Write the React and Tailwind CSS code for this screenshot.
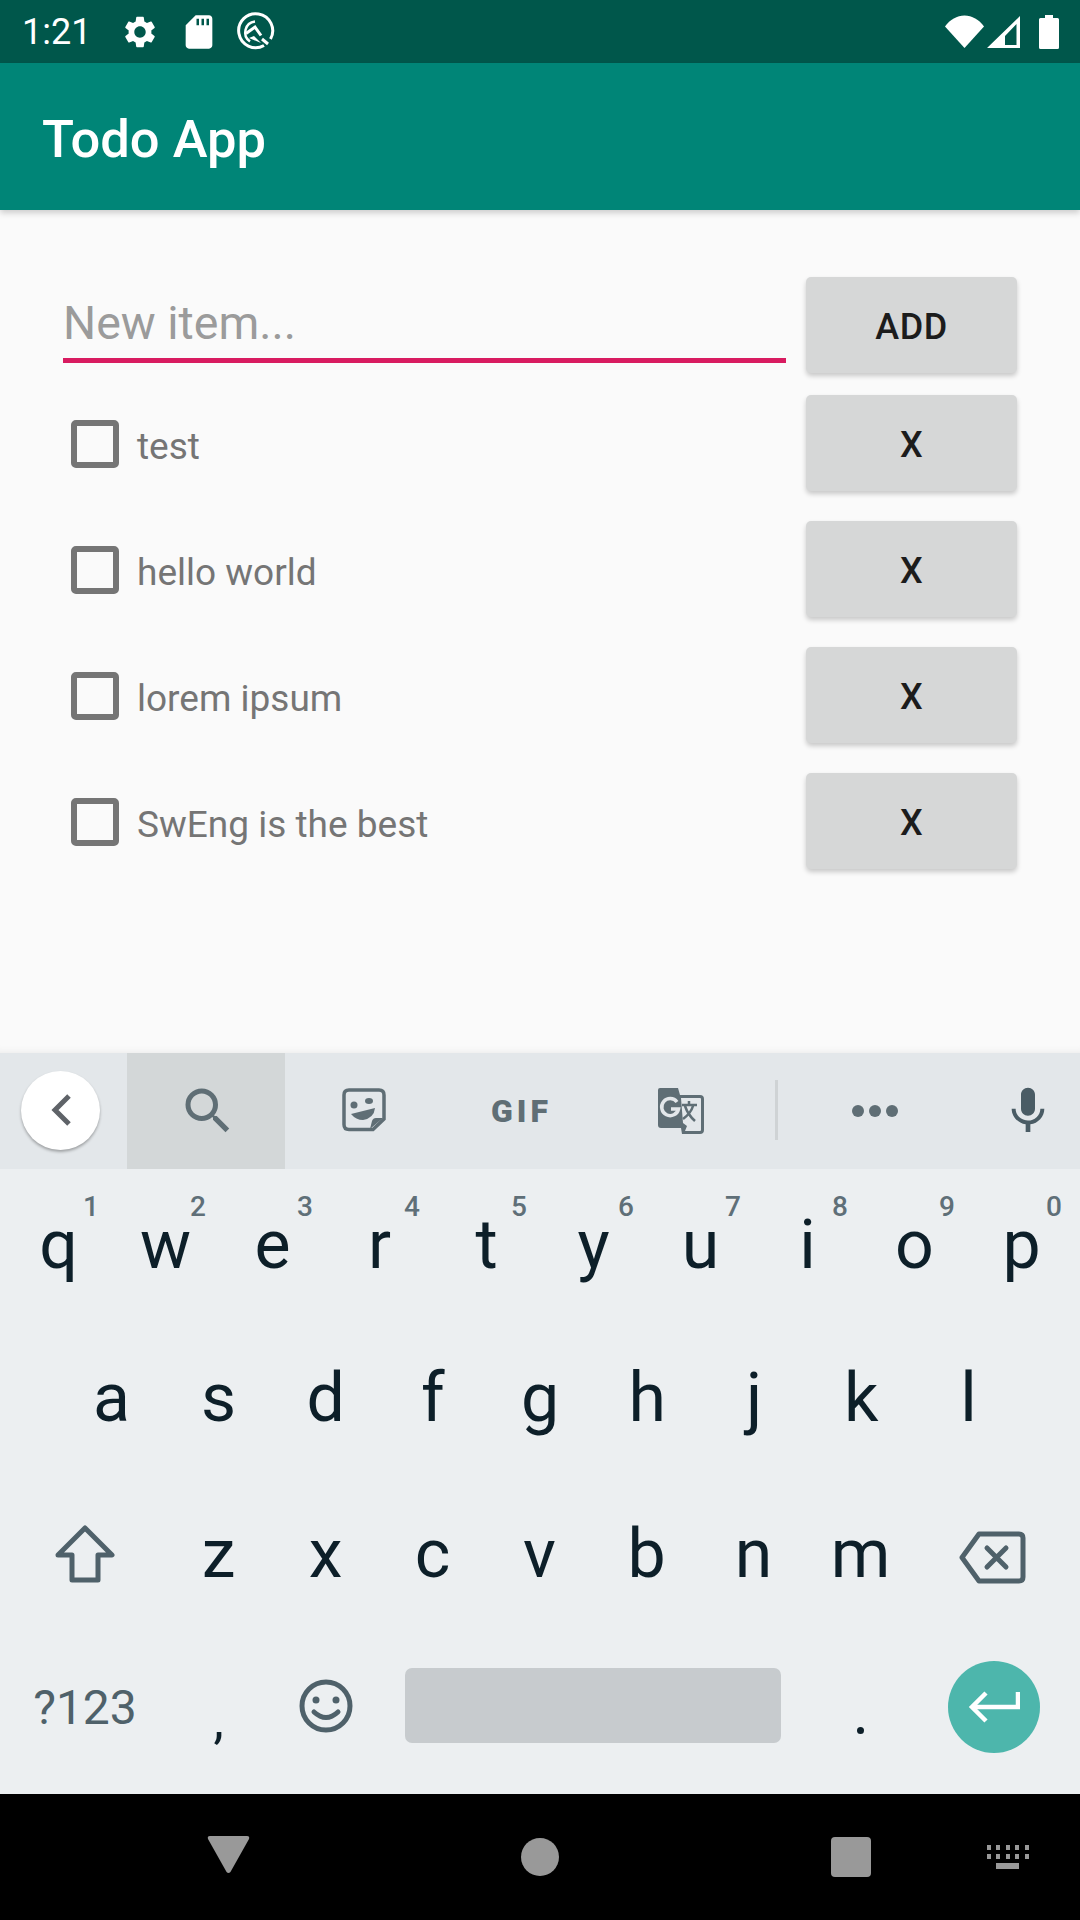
import React from 'react';

const todos = [
  { label: 'test', gap: 'mt-[22px]' },
  { label: 'hello world', gap: 'mt-[30px]' },
  { label: 'lorem ipsum', gap: 'mt-[30px]' },
  { label: 'SwEng is the best', gap: 'mt-[30px]' },
];

const row1 = [['q', '1'], ['w', '2'], ['e', '3'], ['r', '4'], ['t', '5'], ['y', '6'], ['u', '7'], ['i', '8'], ['o', '9'], ['p', '0']];
const row2 = ['a', 's', 'd', 'f', 'g', 'h', 'j', 'k', 'l'];
const row3 = ['z', 'x', 'c', 'v', 'b', 'n', 'm'];

function StatusBar() {
  return (
    <div className="h-[63px] shrink-0 bg-[#00574B] flex items-center text-white">
      <span className="ml-[22px] w-[102px] text-[36px] leading-none">1:21</span>
      <svg className="w-[38px] h-[38px] -ml-[3px]" viewBox="0 0 24 24" fill="#fff">
        <path fillRule="evenodd" d="M19.14 12.94c.04-.3.06-.61.06-.94 0-.32-.02-.64-.07-.94l2.03-1.58a.49.49 0 0 0 .12-.61l-1.92-3.32a.488.488 0 0 0-.59-.22l-2.39.96c-.5-.38-1.03-.7-1.62-.94l-.36-2.54a.484.484 0 0 0-.48-.41h-3.84c-.24 0-.43.17-.47.41l-.36 2.54c-.59.24-1.13.57-1.62.94l-2.39-.96c-.22-.08-.47 0-.59.22L2.74 8.87c-.12.21-.08.47.12.61l2.03 1.58c-.05.3-.09.63-.09.94s.02.64.07.94l-2.03 1.58a.49.49 0 0 0-.12.61l1.92 3.32c.12.22.37.29.59.22l2.39-.96c.5.38 1.03.7 1.62.94l.36 2.54c.05.24.24.41.48.41h3.84c.24 0 .44-.17.47-.41l.36-2.54c.59-.24 1.13-.56 1.62-.94l2.39.96c.22.08.47 0 .59-.22l1.92-3.32c.12-.22.07-.47-.12-.61l-2.01-1.58zM12 15.6c-1.98 0-3.6-1.62-3.6-3.6s1.62-3.6 3.6-3.6 3.6 1.62 3.6 3.6-1.62 3.6-3.6 3.6z" />
      </svg>
      <svg className="w-[40px] h-[40px] ml-[20px]" viewBox="0 0 24 24" fill="#fff">
        <path d="M18 2h-8L4.02 8 4 20c0 1.1.9 2 2 2h12c1.1 0 2-.9 2-2V4c0-1.1-.9-2-2-2zm-6 6h-1.500V4H12v4zm3 0h-1.500V4H15v4zm3 0h-1.500V4H18v4z" />
      </svg>
      <svg className="w-[40px] h-[40px] ml-[16px]" viewBox="0 0 40 40" fill="none" stroke="#fff">
        <path d="M29 33.500A17 17 0 1 1 35.500 27" strokeWidth="3" />
        <path d="M33 32L27 27" strokeWidth="3" />
        <path d="M26 23.500L20 15L11 21.500" strokeWidth="3" />
        <path d="M20 9.500A11 11 0 0 0 15 29.500" strokeWidth="2.500" />
        <path d="M14 26L19 24L26 31Z" fill="#fff" stroke="none" />
      </svg>
      <div className="ml-auto flex items-center pr-[21px]">
        <svg className="w-[39px] h-[33px]" viewBox="0 0 39 33" fill="#fff">
          <path d="M0 11.500C5 4.500 12 0.500 19.500 0.500C27 0.500 34 4.500 39 11.500L19.500 33Z" />
        </svg>
        <svg className="w-[33px] h-[32px] ml-[3px]" viewBox="0 0 33 32" fill="#fff">
          <path fillRule="evenodd" d="M33 0V32H0ZM29.500 8L18 20V29H29.500Z" />
        </svg>
        <svg className="w-[20px] h-[34px] ml-[19px]" viewBox="0 0 20 34" fill="#fff">
          <path d="M6 0H14V3H18.500Q20 3 20 4.500V32.500Q20 34 18.500 34H1.500Q0 34 0 32.500V4.500Q0 3 1.500 3H6Z" />
        </svg>
      </div>
    </div>
  );
}

function GrayButton({ children }) {
  return (
    <button className="w-[211px] h-[96px] pt-[4px] shrink-0 bg-[#D6D7D7] rounded-[5px] shadow-[0_3px_5px_rgba(0,0,0,0.2)] text-[36px] font-medium leading-none tracking-[0.5px] text-[#1c1c1c] flex items-center justify-center">
      {children}
    </button>
  );
}

function TodoRow({ label, gap }) {
  return (
    <div className={`flex items-center ${gap}`}>
      <div className="w-[48px] h-[48px] mt-[2px] ml-[8px] border-[6px] border-[#757575] rounded-[5px]" />
      <span className="flex-1 mt-[7px] ml-[18px] text-[37px] leading-none text-[#757575]">{label}</span>
      <GrayButton>X</GrayButton>
    </div>
  );
}

function Key({ children, className = 'flex-1' }) {
  return (
    <div className={`relative h-full flex items-center justify-center ${className}`}>{children}</div>
  );
}

function Letter({ char, hint }) {
  return (
    <Key>
      <span className="text-[68px] leading-none text-[#0D1F29]">{char}</span>
      {hint && <span className="absolute top-[24px] right-[13px] text-[28px] font-medium leading-none text-[#5F6F78]">{hint}</span>}
    </Key>
  );
}

function SuggestionStrip() {
  return (
    <div className="h-[116px] shrink-0 bg-[#E3E7EA] flex items-stretch">
      <div className="w-[127px] flex items-center pl-[21px]">
        <div className="w-[79px] h-[79px] -mt-[2px] rounded-full bg-white shadow-[0_2px_3px_rgba(0,0,0,0.3)] flex items-center justify-center">
          <svg className="w-[20px] h-[32px]" viewBox="0 0 20 32" fill="none" stroke="#5f6368" strokeWidth="5">
            <path d="M18 2L4 16L18 30" />
          </svg>
        </div>
      </div>
      <div className="w-[158px] pl-[4px] bg-[#D3D7D8] flex items-center justify-center">
        <svg className="w-[60px] h-[60px]" viewBox="0 0 24 24" fill="#5F6E75">
          <path d="M15.500 14h-.79l-.28-.27A6.471 6.471 0 0 0 16 9.500 6.500 6.500 0 1 0 9.500 16c1.610 0 3.090-.59 4.230-1.570l.27.28v.79l5 4.990L20.490 19l-4.990-5zm-6 0C7.010 14 5 11.990 5 9.500S7.010 5 9.500 5 14 7.010 14 9.500 11.990 14 9.500 14z" />
        </svg>
      </div>
      <div className="w-[158px] flex items-center justify-center">
        <svg className="w-[44px] h-[44px] -mt-[2px]" viewBox="0 0 44 44" fill="none">
          <path d="M31 41.500H7Q2 41.500 2 36.500V7Q2 2 7 2H37Q42 2 42 7V31L31 41.500Z" stroke="#5F6E75" strokeWidth="3.500" />
          <path d="M28 41L30 33Q31 30 34 30H41Z" fill="#5F6E75" />
          <circle cx="12" cy="17" r="3.500" fill="#5F6E75" />
          <ellipse cx="27" cy="13" rx="4" ry="3" fill="#5F6E75" />
          <path d="M9 26L33 20Q32 30 21 32Q14 32 9 26Z" fill="#5F6E75" />
        </svg>
      </div>
      <div className="w-[157px] flex items-center justify-center">
        <span className="text-[32px] leading-none font-black text-[#5F6E75] tracking-[4px]">GIF</span>
      </div>
      <div className="w-[162px] flex items-center justify-center">
        <svg className="w-[46px] h-[46px]" viewBox="0 0 46 46" fill="#5F6E75">
          <path d="M2 0H20L22 7H42Q46 7 46 11V42Q46 46 42 46H24L23 40H3Q0 40 0 37V2Q0 0 2 0Z" />
          <path d="M23 10H42Q43 10 43 11V42Q43 43 42 43H27L29 38L25 35L23 10Z" fill="#E3E7EA" />
          <path d="M19 14A8.500 8.500 0 1 0 20.500 21H13" fill="none" stroke="#E3E7EA" strokeWidth="3.500" />
          <path d="M24 17H39M31 13V17M27 18Q30 27 37 33M35 18Q33 25 25 31" fill="none" stroke="#5F6E75" strokeWidth="2.500" />
        </svg>
      </div>
      <div className="w-[3px] h-[60px] self-center -mt-[2px] ml-[13px] bg-[#CFD3D5]" />
      <div className="w-[193px] flex items-center justify-center gap-[5px]">
        <span className="w-[12px] h-[12px] rounded-full bg-[#5F6E75]" />
        <span className="w-[12px] h-[12px] rounded-full bg-[#5F6E75]" />
        <span className="w-[12px] h-[12px] rounded-full bg-[#5F6E75]" />
      </div>
      <div className="flex-1 pl-[5px] flex items-center justify-center">
        <svg className="w-[56px] h-[56px]" viewBox="0 0 24 24" fill="#4A5C65">
          <path d="M12 14c1.660 0 3-1.340 3-3V5c0-1.660-1.340-3-3-3S9 3.340 9 5v6c0 1.660 1.340 3 3 3zm5.300-3c0 3-2.540 5.100-5.300 5.100S6.700 14 6.700 11H5c0 3.410 2.720 6.230 6 6.720V21h2v-3.280c3.280-.48 6-3.300 6-6.720h-1.700z" />
        </svg>
      </div>
    </div>
  );
}

function Keyboard() {
  return (
    <div className="h-[741px] shrink-0 flex flex-col bg-[#ECEFF1]">
      <SuggestionStrip />
      <div className="flex-1 flex flex-col">
        <div className="h-[151px] flex px-[5px]">
          {row1.map(([c, h]) => <Letter key={c} char={c} hint={h} />)}
        </div>
        <div className="h-[156px] flex px-[58px]">
          {row2.map(c => <Letter key={c} char={c} />)}
        </div>
        <div className="h-[156px] flex">
          <Key className="w-[165px] pl-[5px]">
            <svg className="w-[60px] h-[58px]" viewBox="0 0 60 58" fill="none" stroke="#4F616A" strokeWidth="5" strokeLinejoin="round">
              <path d="M30 3L57 30H43V55H17V30H3Z" />
            </svg>
          </Key>
          {row3.map(c => <div key={c} className="w-[107px] h-full"><Letter char={c} /></div>)}
          <Key className="flex-1">
            <svg className="w-[67px] h-[53px] mr-[10px] mt-[6px]" viewBox="0 0 67 53" fill="none" stroke="#4F616A" strokeWidth="5" strokeLinejoin="round" strokeLinecap="round">
              <path d="M20 3H60Q64 3 64 7V46Q64 50 60 50H20L3 26.500Z" />
              <path d="M28 17L47 36M47 17L28 36" />
            </svg>
          </Key>
        </div>
        <div className="h-[162px] pb-[10px] flex">
          <Key className="w-[165px] pl-[5px]"><span className="text-[48px] leading-none text-[#4F616A]">?123</span></Key>
          <Key className="w-[107px]"><span className="text-[52px] leading-none text-[#0D1F29] mt-[25px]">,</span></Key>
          <Key className="w-[107px]">
            <svg className="w-[54px] h-[54px] -mt-[5px]" viewBox="0 0 54 54" fill="none" stroke="#4F616A" strokeWidth="5">
              <circle cx="27" cy="27" r="24" />
              <path d="M15 33Q27 44 39 33" strokeLinecap="round" />
              <circle cx="17" cy="21" r="3.500" fill="#4F616A" stroke="none" />
              <circle cx="37" cy="21" r="3.500" fill="#4F616A" stroke="none" />
            </svg>
          </Key>
          <div className="w-[428px] h-full flex items-center justify-center">
            <div className="w-[376px] h-[75px] rounded-[7px] bg-[#C7CBCE] -mt-[5px]" />
          </div>
          <Key className="w-[107px]"><span className="w-[7px] h-[7px] rounded-full bg-[#0D1F29] mt-[45px]" /></Key>
          <Key className="flex-1">
            <div className="w-[92px] h-[92px] mr-[7px] rounded-full bg-[#4DB6AC] flex items-center justify-center -mt-[3px]">
              <svg className="w-[52px] h-[32px]" viewBox="0 0 52 32" fill="none" stroke="#fff" strokeWidth="4.500">
                <path d="M50 1V16H5" />
                <path d="M18 2L4 16L18 30" />
              </svg>
            </div>
          </Key>
        </div>
      </div>
    </div>
  );
}

function NavBar() {
  return (
    <div className="h-[126px] shrink-0 bg-black flex items-center relative">
      <div className="w-[457px] flex justify-end">
        <svg className="w-[43px] h-[39px] mr-[207px] -mt-[6px]" viewBox="0 0 44 40" fill="#999">
          <path d="M3 1H41Q44 1 43 4L24 38Q22 40 20 38L1 4Q0 1 3 1Z" />
        </svg>
      </div>
      <div className="w-[38px] h-[38px] ml-[64px] rounded-full bg-[#999]" />
      <div className="w-[40px] h-[40px] ml-[272px] rounded-[4px] bg-[#999]" />
      <svg className="w-[42px] h-[24px] ml-[116px]" viewBox="0 0 42 24" fill="#999">
        <path d="M0 0h4v5H0zM9 0h4v5H9zM19 0h4v5h-4zM28 0h4v5h-4zM38 0h4v5h-4zM0 9h4v5H0zM9 9h4v5H9zM19 9h4v5h-4zM28 9h4v5h-4zM38 9h4v5h-4zM9 18h23v6H9z" />
      </svg>
    </div>
  );
}

export default function App() {
  return (
    <div className="w-[1080px] h-[1920px] flex flex-col overflow-hidden font-['Roboto',sans-serif] bg-[#FAFAFA]">
      <StatusBar />
      <header className="relative z-10 h-[147px] pt-[5px] shrink-0 bg-[#008577] flex items-center pl-[42px] shadow-[0_3px_6px_rgba(0,0,0,0.18)]">
        <h1 className="text-[52.500px] font-medium leading-none text-white">Todo App</h1>
      </header>
      <main className="flex-1 min-h-0 pt-[67px] pl-[63px] pr-[63px] shadow-[inset_0_-8px_8px_-8px_rgba(0,0,0,0.08)]">
        <div className="flex items-start">
          <div className="flex-1 mr-[20px] h-[86px] border-b-[5px] border-[#D81B60] flex items-center">
            <span className="text-[46.500px] mt-[12px] leading-none text-[#9B9B9B]">New item...</span>
          </div>
          <GrayButton>ADD</GrayButton>
        </div>
        {todos.map(t => <TodoRow key={t.label} label={t.label} gap={t.gap} />)}
      </main>
      <Keyboard />
      <NavBar />
    </div>
  );
}
